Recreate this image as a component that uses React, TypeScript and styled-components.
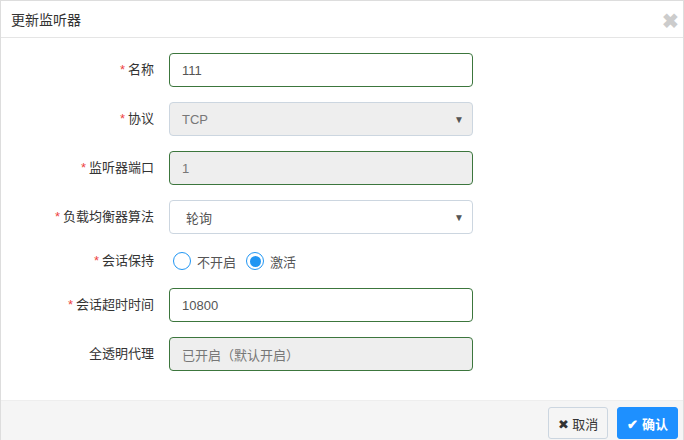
import React from "react";
import styled, { createGlobalStyle } from "styled-components";

const G = createGlobalStyle`
  html,body{margin:0;padding:0;background:#fff;}
  body{font-family:"Liberation Sans","Noto Sans CJK SC",sans-serif;font-size:13px;color:#333;}
`;
const Modal = styled.div`
  width:684px;height:440px;box-sizing:border-box;border:1px solid #ddd;border-bottom:none;
  display:flex;flex-direction:column;
`;
const Header = styled.div`
  height:36px;border-bottom:1px solid #e5e5e5;display:flex;align-items:center;
  justify-content:space-between;padding:0 4px 0 10px;font-size:14px;color:#333;
`;
const Close = styled.span`font-size:20px;font-weight:bold;color:#ccc;line-height:1;margin-top:4px;`;
const Body = styled.div`flex:1;padding-top:15px;display:flex;flex-direction:column;gap:15px;`;
const Row = styled.div<{ $short?: boolean }>`display:flex;align-items:center;height:${p => p.$short ? 24 : 34}px;`;
const Label = styled.div`text-align:right;padding-right:15px;box-sizing:border-box;
  width:168px;color:#333;margin-top:-4px;`;
const Star = styled.span`color:#e44;margin-right:3px;`;
const Field = styled.div<{ $v: "ok" | "sel" | "dis" | "okdis" }>`
  width:304px;height:34px;box-sizing:border-box;border-radius:4px;display:flex;align-items:center;
  justify-content:space-between;padding:0 8px 0 ${p => p.$v === "sel" ? 16 : 12}px;
  border:1px solid ${p => (p.$v === "ok" || p.$v === "okdis") ? "#3c763d" : "#ccd6e0"};
  background:${p => (p.$v === "dis" || p.$v === "okdis") ? "#eee" : "#fff"};
  color:${p => (p.$v === "dis" || p.$v === "okdis") ? "#777" : "#555"};
`;
const Arrow = styled.span`font-size:10px;color:#555;`;
const Radios = styled.div`display:flex;align-items:center;gap:6px;color:#555;`;
const Radio = styled.span<{ $on?: boolean }>`
  width:18px;height:18px;border-radius:50%;border:1px solid #2196f3;box-sizing:border-box;
  display:inline-flex;align-items:center;justify-content:center;margin-left:4px;
  &::after{content:"";width:11px;height:11px;border-radius:50%;background:${p => p.$on ? "#2196f3" : "transparent"};}
`;
const Footer = styled.div`height:39px;background:#f5f5f5;border-top:1px solid #eee;display:flex;
  justify-content:flex-end;align-items:flex-end;gap:9px;padding-right:5px;`;
const Btn = styled.button<{ $primary?: boolean }>`
  height:32px;border-radius:3px;font-family:inherit;font-size:13px;padding:0 9px;display:flex;align-items:center;gap:3px;
  border:1px solid ${p => p.$primary ? "#1e90ff" : "#ccd6e0"};
  background:${p => p.$primary ? "#1e90ff" : "#f5f5f5"};color:${p => p.$primary ? "#fff" : "#333"};
  font-weight:${p => p.$primary ? "bold" : "normal"};margin-bottom:1px;
`;

export default function App() {
  return (<>
    <G />
    <Modal>
      <Header>更新监听器<Close>✖</Close></Header>
      <Body>
        <Row><Label><Star>*</Star>名称</Label><Field $v="ok">111</Field></Row>
        <Row><Label><Star>*</Star>协议</Label><Field $v="dis">TCP<Arrow>▼</Arrow></Field></Row>
        <Row><Label><Star>*</Star>监听器端口</Label><Field $v="okdis">1</Field></Row>
        <Row><Label><Star>*</Star>负载均衡器算法</Label><Field $v="sel">轮询<Arrow>▼</Arrow></Field></Row>
        <Row $short><Label><Star>*</Star>会话保持</Label>
          <Radios><Radio />不开启<Radio $on />激活</Radios></Row>
        <Row><Label><Star>*</Star>会话超时时间</Label><Field $v="ok">10800</Field></Row>
        <Row><Label>全透明代理</Label><Field $v="okdis">已开启（默认开启）</Field></Row>
      </Body>
      <Footer>
        <Btn>✖ 取消</Btn>
        <Btn $primary>✔ 确认</Btn>
      </Footer>
    </Modal>
  </>);
}
